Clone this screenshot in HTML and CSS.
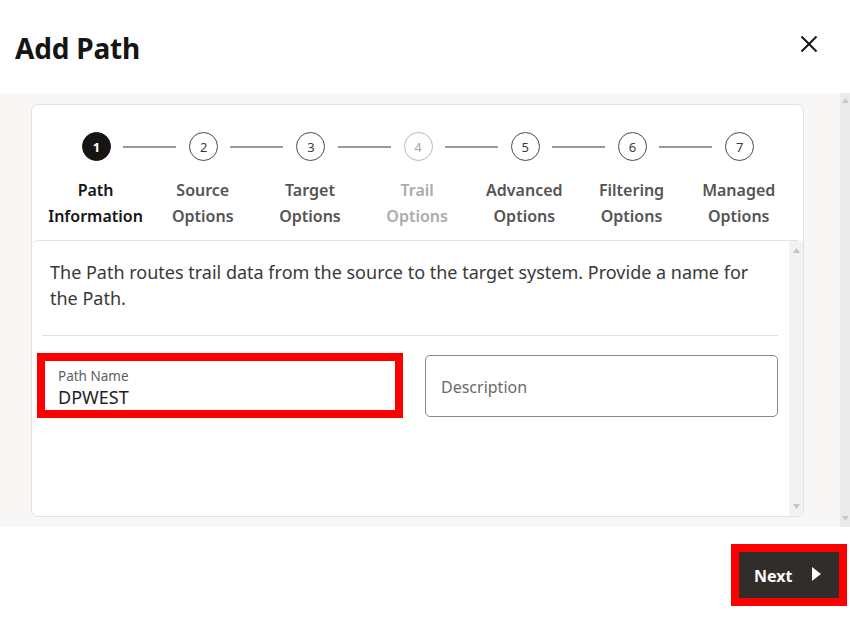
FILE: index.html
```html
<!DOCTYPE html>
<html lang="en">
<head>
<meta charset="utf-8">
<title>Add Path</title>
<link rel="stylesheet" href="styles.css">
</head>
<body>
<div class="dialog">
  <header class="dlg-header">
    <h1 class="dlg-title">Add Path</h1>
    <button class="close" aria-label="Close">
      <svg width="18" height="18" viewBox="0 0 18 18"><path d="M1.5 1.5 L16.5 16.5 M16.5 1.5 L1.5 16.5" stroke="#161513" stroke-width="2" fill="none"/></svg>
    </button>
  </header>

  <div class="dlg-body">
    <div class="body-main">
      <div class="card">
        <div class="stepper">
          <div class="step-track">
            <span class="dot dot--active">1</span><span class="line"></span>
            <span class="dot">2</span><span class="line"></span>
            <span class="dot">3</span><span class="line"></span>
            <span class="dot dot--disabled">4</span><span class="line"></span>
            <span class="dot">5</span><span class="line"></span>
            <span class="dot">6</span><span class="line"></span>
            <span class="dot">7</span>
          </div>
          <div class="step-labels">
            <div class="lbl lbl--active">Path<br>Information</div>
            <div class="lbl">Source<br>Options</div>
            <div class="lbl">Target<br>Options</div>
            <div class="lbl lbl--disabled">Trail<br>Options</div>
            <div class="lbl">Advanced<br>Options</div>
            <div class="lbl">Filtering<br>Options</div>
            <div class="lbl">Managed<br>Options</div>
          </div>
        </div>

        <div class="panel">
          <div class="panel-content">
            <p class="intro">The Path routes trail data from the source to the target system. Provide a name for the Path.</p>
            <hr class="divider">
            <div class="fields">
              <div class="field field--hl">
                <span class="field-label">Path Name</span>
                <span class="field-value">DPWEST</span>
              </div>
              <div class="field field--desc">
                <span class="placeholder">Description</span>
              </div>
            </div>
          </div>
          <div class="vscroll vscroll--inner">
            <svg width="7" height="5" viewBox="0 0 7 5"><path d="M0 5 L3.5 0 L7 5 Z" fill="#c4c4c4"/></svg>
            <svg width="7" height="5" viewBox="0 0 7 5"><path d="M0 0 L3.5 5 L7 0 Z" fill="#c4c4c4"/></svg>
          </div>
        </div>
      </div>
    </div>
    <div class="vscroll vscroll--outer">
      <svg width="7" height="5" viewBox="0 0 7 5"><path d="M0 5 L3.5 0 L7 5 Z" fill="#c8c8c8"/></svg>
      <svg width="7" height="5" viewBox="0 0 7 5"><path d="M0 0 L3.5 5 L7 0 Z" fill="#c8c8c8"/></svg>
    </div>
  </div>

  <footer class="dlg-footer">
    <button class="next">
      <span>Next</span>
      <svg width="9" height="14" viewBox="0 0 9 14"><path d="M0 0 L9 7 L0 14 Z" fill="#ffffff"/></svg>
    </button>
  </footer>
</div>
</body>
</html>
```

FILE: styles.css
```css
* { box-sizing: border-box; }

html, body {
  margin: 0;
  padding: 0;
  background: #ffffff;
}

body {
  font-family: "Noto Sans", "Open Sans", sans-serif;
  color: #161513;
}

.dialog {
  width: 850px;
  height: 619px;
  display: flex;
  flex-direction: column;
}

/* Header */
.dlg-header {
  height: 93px;
  flex: 0 0 93px;
  display: flex;
  align-items: center;
  justify-content: space-between;
  padding: 0 32px 0 15px;
}

.dlg-title {
  margin: 0;
  font-size: 28px;
  font-weight: 700;
  letter-spacing: -0.2px;
  color: #161513;
  position: relative;
  top: 1px;
}

.close {
  border: 0;
  background: none;
  padding: 0;
  width: 18px;
  height: 18px;
  display: flex;
  position: relative;
  top: -3px;
}

/* Body */
.dlg-body {
  flex: 0 0 434px;
  height: 434px;
  display: flex;
  background: #f8f7f5;
}

.body-main {
  flex: 1;
  padding: 11px 36px 10px 31px;
  display: flex;
}

.card {
  flex: 1;
  background: #ffffff;
  border: 1px solid #e3e2e0;
  border-radius: 7px;
  display: flex;
  flex-direction: column;
  overflow: hidden;
}

/* Stepper */
.stepper {
  padding: 27px 0 0 10px;
}

.step-track {
  display: flex;
  align-items: center;
  margin-left: 40px;
  height: 29px;
}

.dot {
  flex: 0 0 29px;
  width: 29px;
  height: 29px;
  border-radius: 50%;
  border: 1.5px solid #4a4a4a;
  display: flex;
  align-items: center;
  justify-content: center;
  font-size: 13px;
  color: #3a3a3a;
}

.dot--active {
  background: #161513;
  border-color: #161513;
  color: #ffffff;
  font-weight: 700;
}

.dot--disabled {
  border-color: #b8b8b8;
  color: #a8a8a8;
}

.line {
  flex: 0 0 53px;
  height: 2px;
  background: #9a9a9a;
  margin: 0 13px 0 12.2px;
}

.step-labels {
  display: grid;
  grid-template-columns: repeat(7, 107.2px);
  margin-top: 16px;
}

.lbl {
  text-align: center;
  font-size: 16px;
  line-height: 26px;
  font-weight: 600;
  color: #555453;
}

.lbl--active { color: #161513; }
.lbl--disabled { color: #ababab; }

/* Panel */
.panel {
  flex: 1;
  margin-top: 11px;
  border-top: 1px solid #e3e2e0;
  border-radius: 7px 7px 0 0;
  display: flex;
}

.panel-content {
  flex: 1;
  padding: 18px 11px 0 10px;
}

.intro {
  margin: 0;
  padding: 0 18px 0 8px;
  font-size: 18px;
  line-height: 26px;
  color: #3a3938;
}

.divider {
  border: 0;
  border-top: 1px solid #dedede;
  margin: 24px 0 17px;
}

.fields {
  display: grid;
  grid-template-columns: 366px 353px;
  column-gap: 22px;
  align-items: center;
  margin-left: -5px;
}

.field {
  background: #ffffff;
  display: flex;
  flex-direction: column;
}

.field--hl {
  height: 65px;
  border: 8px solid #ff0000;
  padding: 7px 13px 0;
}

.field-label {
  font-size: 13.5px;
  line-height: 17px;
  color: #5e5e5e;
}

.field-value {
  font-size: 18px;
  line-height: 24px;
  color: #1f1f1f;
}

.field--desc {
  height: 62px;
  border: 1px solid #8a8a8a;
  border-radius: 5px;
  justify-content: center;
  padding: 3px 15px 0;
}

.placeholder {
  font-size: 16px;
  color: #6a6a6a;
}

/* Scrollbars */
.vscroll {
  display: flex;
  flex-direction: column;
  justify-content: space-between;
  align-items: center;
}

.vscroll--inner {
  flex: 0 0 14px;
  background: #f2f2f2;
  padding: 7px 0 7px;
}

.vscroll--outer {
  flex: 0 0 10px;
  background: #ebebeb;
  padding: 5px 0 6px;
}

/* Footer */
.dlg-footer {
  flex: 1;
  display: flex;
  justify-content: flex-end;
  align-items: flex-start;
  padding: 25px 11px 0 0;
}

.next {
  width: 100px;
  height: 46px;
  border: 0;
  background: #312d2a;
  outline: 8px solid #ff0000;
  color: #ffffff;
  font-family: "Noto Sans", "Open Sans", sans-serif;
  font-size: 16px;
  font-weight: 700;
  display: flex;
  align-items: center;
  justify-content: space-between;
  padding: 1px 18px 0 15px;
}

.next svg { position: relative; top: -2px; }
```
